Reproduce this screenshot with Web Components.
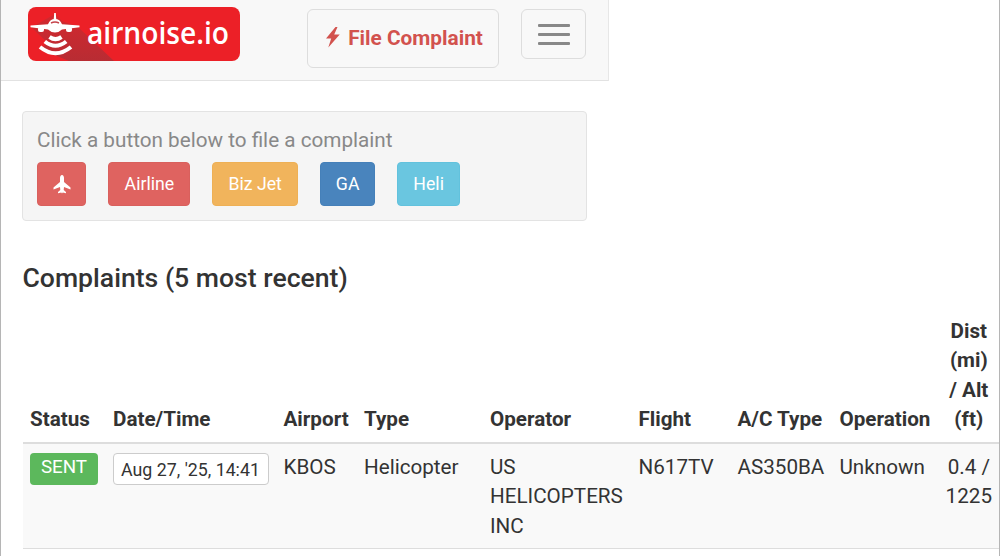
<!DOCTYPE html>
<html lang="en">
<head>
<meta charset="utf-8">
<title>airnoise.io</title>
<style>
    body {
        margin: 0;
        height: 556px;
        overflow: hidden;
        background: #fff;
        color: #333;
        font-family: Roboto, Arial, sans-serif;
        font-size: 20.65px;
        line-height: 29.4px;
    }
</style>
</head>
<body>
<airnoise-app></airnoise-app>
<script>
class AirnoiseLogo extends HTMLElement {
    constructor() {
        super();
        this.attachShadow({ mode: "open" });
        this.shadowRoot.innerHTML = `
            <style>
            :host { display: block; width: 212px; height: 54px; }
            svg { display: block; }
            text { font-family: "Open Sans", "Noto Sans", sans-serif; font-size: 30px; font-weight: 600; }
            </style>
            <svg width="212" height="54" viewBox="0 0 212 54">
                <defs>
                    <clipPath id="box"><rect width="212" height="54" rx="8"/></clipPath>
                    <linearGradient id="shade" x1="0" y1="0" x2="0" y2="1">
                        <stop offset="0" stop-color="#d3282e"/>
                        <stop offset="1" stop-color="#b82c33"/>
                    </linearGradient>
                </defs>
                <rect width="212" height="54" rx="8" fill="#ec2027"/>
                <path clip-path="url(#box)" fill="url(#shade)" d="M4 20 L27 7 L34 14 L50 20 L86 54 H41 L12 42 L20 36 L4 21z"/>
                <g fill="#fff">
                    <path d="M26.2 6h1.600l.5 7h-2.600z"/>
                    <path d="M2.500 18.600 L20 17.200 Q22 12 27 12 Q32 12 34 17.200 L51.500 18.600 V20.300 L34 22.500 Q31 25.500 27 25.500 Q23 25.500 20 22.500 L2.500 20.300z"/>
                    <rect x="10" y="19.500" width="6" height="5.500" rx="2"/>
                    <rect x="38" y="19.500" width="6" height="5.500" rx="2"/>
                </g>
                <path d="M23 16q4-1.800 8 0" fill="none" stroke="#c5444b" stroke-width="1.5"/>
                <g fill="none" stroke="#fff" stroke-width="4">
                    <path d="M21.500 30q6 4.200 12 0"/>
                    <path d="M16.800 34.500q10.700 8.500 21.400 0"/>
                    <path d="M12 40q15.500 12.500 31 0"/>
                </g>
                <text x="59" y="36.500" fill="#fff" textLength="142" lengthAdjust="spacingAndGlyphs">airnoise.io</text>
            </svg>
        `;
    }
}
customElements.define('airnoise-logo', AirnoiseLogo);

class NavBar extends HTMLElement {
    constructor() {
        super();
        this.attachShadow({ mode: "open" });
        this.shadowRoot.innerHTML = `
            <style>
            :host {
                display: flex;
                align-items: flex-start;
                box-sizing: border-box;
                width: 608px;
                height: 81px;
                padding: 7px 22px 0 27px;
                background: #f8f8f8;
                border-right: 1px solid #e7e7e7;
                border-bottom: 1px solid #e2e2e2;
            }
            button {
                box-sizing: border-box;
                border: 1px solid #ddd;
                border-radius: 6px;
                background: transparent;
                padding: 0;
                font: inherit;
            }
            .file {
                display: flex;
                align-items: center;
                justify-content: center;
                width: 192px;
                height: 59px;
                margin: 2px 22px 0 auto;
                padding: 1px 0 0 3px;
                color: #d2524e;
                font-weight: 700;
                font-size: 20.8px;
                gap: 8px;
            }
            .file svg { margin-top: -3px; }
            .menu {
                display: flex;
                flex-direction: column;
                align-items: center;
                justify-content: center;
                gap: 6px;
                width: 65px;
                height: 50px;
                margin-top: 2px;
            }
            .menu i { width: 32px; height: 3px; border-radius: 1px; background: #888; }
            </style>
            <airnoise-logo></airnoise-logo>
            <button class="file">
                <svg width="14" height="21" viewBox="0 0 14 21"><path d="M9.500 0 L0 11.500 H5.200 L2.300 20.500 L13.700 7.500 H8.200 L11.500 0z" fill="#d2524e"/></svg>
                <span>File Complaint</span>
            </button>
            <button class="menu" aria-label="Menu"><i></i><i></i><i></i></button>
        `;
    }
}
customElements.define('nav-bar', NavBar);

class ComplaintButton extends HTMLElement {
    constructor() {
        super();
        this.attachShadow({ mode: "open" });
        this.shadowRoot.innerHTML = `
            <style>
            :host { display: block; }
            button {
                display: flex;
                align-items: center;
                justify-content: center;
                box-sizing: border-box;
                width: var(--width);
                height: 44px;
                padding: 0;
                border: 1px solid var(--edge);
                border-radius: 4px;
                background: var(--fill);
                color: #fff;
                font: inherit;
                font-size: 17.7px;
            }
            </style>
            <button><slot></slot></button>
        `;
    }
}
customElements.define('complaint-button', ComplaintButton);

class ComplaintPanel extends HTMLElement {
    constructor() {
        super();
        this.attachShadow({ mode: "open" });
        this.shadowRoot.innerHTML = `
            <style>
            :host {
                display: block;
                box-sizing: border-box;
                width: 565px;
                height: 110px;
                margin: 30px 0 0 22px;
                padding: 14px 14px 13px;
                background: #f5f5f5;
                border: 1px solid #e3e3e3;
                border-radius: 4px;
                color: #888;
            }
            .hint { font-size: 20.7px; }
            .buttons { display: flex; gap: 22px; margin-top: 7px; }
            .danger { --fill: #df6360; --edge: #d9605d; }
            .warning { --fill: #f1b45c; --edge: #eeb055; }
            .primary { --fill: #4984bd; --edge: #4580b9; }
            .info { --fill: #6ac6e0; --edge: #62c2dd; }
            </style>
            <div class="hint">Click a button below to file a complaint</div>
            <div class="buttons">
                <complaint-button class="danger" style="--width: 49.400px">
                    <svg width="18" height="19" viewBox="0 0 18 19"><path fill="#fff" d="M9 0 C10.300 0 11 1.500 11 3 V7 L17.500 12.500 V14.500 L11 12 L10.700 15 L13 17 V18.300 L9.700 17.500 L9 18.600 L8.300 17.500 L5 18.300 V17 L7.300 15 L7 12 L.5 14.500 V12.500 L7 7 V3 C7 1.500 7.700 0 9 0z"/></svg>
                </complaint-button>
                <complaint-button class="danger" style="--width: 82px">Airline</complaint-button>
                <complaint-button class="warning" style="--width: 85.500px">Biz Jet</complaint-button>
                <complaint-button class="primary" style="--width: 55.500px">GA</complaint-button>
                <complaint-button class="info" style="--width: 62.500px">Heli</complaint-button>
            </div>
        `;
    }
}
customElements.define('complaint-panel', ComplaintPanel);

class ComplaintsTable extends HTMLElement {
    constructor() {
        super();
        this.attachShadow({ mode: "open" });
        this.columns = [
            { title: 'Status', width: 83 },
            { title: 'Date/Time', width: 170.5 },
            { title: 'Airport', width: 80.5 },
            { title: 'Type', width: 126 },
            { title: 'Operator', width: 148.5 },
            { title: 'Flight', width: 99 },
            { title: 'A/C Type', width: 102 },
            { title: 'Operation', width: 106 },
            { title: 'Dist<br>(mi)<br>/ Alt<br>(ft)', width: 61.4 },
        ];
        this.complaints = [
            ['<span class="label">SENT</span>', '<span class="date">Aug 27, \'25, 14:41</span>', 'KBOS', 'Helicopter',
                'US<br>HELICOPTERS<br>INC', 'N617TV', 'AS350BA', 'Unknown', '0.4 /<br>1225'],
        ];
        this.render();
    }

    render() {
        this.shadowRoot.innerHTML = `
            <style>
            :host { display: block; margin: 14px 0 0 22.600px; }
            table { table-layout: fixed; border-collapse: separate; border-spacing: 0; width: 976.900px; }
            th, td { padding: 7.400px; text-align: left; white-space: nowrap; }
            th { vertical-align: bottom; padding-top: 8px; padding-bottom: 7.800px; border-bottom: 2px solid #ddd; font-weight: 700; }
            td { vertical-align: top; padding-top: 8.300px; background: #f9f9f9; border-bottom: 1px solid #ddd; }
            th:last-child, td:last-child { text-align: center; padding-left: 0; padding-right: 0; }
            .label, .date { display: block; box-sizing: border-box; height: 32px; text-align: center; }
            .label {
                width: 68px;
                border-radius: 4px;
                background: #5cb85c;
                color: #fff;
                font-size: 18.8px;
            }
            .date {
                width: 156px;
                margin-bottom: -3px;
                border: 1px solid #ccc;
                border-radius: 4px;
                background: #fff;
                font-size: 17.8px;
                line-height: 31px;
                text-indent: -1px;
            }
            </style>
            <table>
                <colgroup>${this.columns.map(col => `<col style="width: ${col.width}px">`).join('')}</colgroup>
                <thead><tr>${this.columns.map(col => `<th>${col.title}</th>`).join('')}</tr></thead>
                <tbody>${this.complaints.map(row => `<tr>${row.map(cell => `<td>${cell}</td>`).join('')}</tr>`).join('')}</tbody>
            </table>
        `;
    }
}
customElements.define('complaints-table', ComplaintsTable);

class AirnoiseApp extends HTMLElement {
    constructor() {
        super();
        this.attachShadow({ mode: "open" });
        this.shadowRoot.innerHTML = `
            <style>
            :host {
                display: block;
                box-sizing: border-box;
                height: 556px;
                overflow: hidden;
                border-left: 1px solid #b5b5b5;
                border-right: 1px solid #b5b5b5;
            }
            .page { margin-left: -1px; }
            h2 { margin: 40px 0 0 22.500px; font-size: 26.600px; line-height: 34px; font-weight: 500; }
            </style>
            <nav-bar></nav-bar>
            <div class="page">
                <complaint-panel></complaint-panel>
                <h2>Complaints (5 most recent)</h2>
                <complaints-table></complaints-table>
            </div>
        `;
    }
}
customElements.define('airnoise-app', AirnoiseApp);
</script>
</body>
</html>
